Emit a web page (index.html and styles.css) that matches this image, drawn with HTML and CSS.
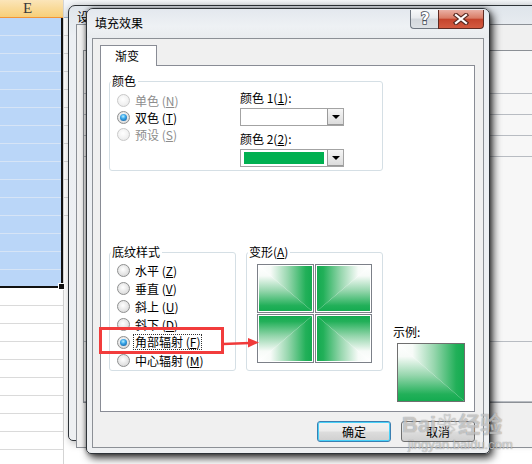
FILE: index.html
```html
<!DOCTYPE html>
<html>
<head>
<meta charset="utf-8">
<link rel="stylesheet" href="styles.css">
</head>
<body>
<svg class="defs" width="0" height="0">
  <defs>
    <linearGradient id="gx" x1="0" y1="0" x2="1" y2="0">
      <stop offset="0" stop-color="#ffffff"/>
      <stop offset="0.22" stop-color="#f7fbf8"/>
      <stop offset="0.55" stop-color="#96d6ad"/>
      <stop offset="0.88" stop-color="#22b059"/>
      <stop offset="1" stop-color="#14ab50"/>
    </linearGradient>
    <linearGradient id="gy" x1="0" y1="0" x2="0" y2="1">
      <stop offset="0" stop-color="#ffffff"/>
      <stop offset="0.22" stop-color="#f7fbf8"/>
      <stop offset="0.55" stop-color="#96d6ad"/>
      <stop offset="0.88" stop-color="#22b059"/>
      <stop offset="1" stop-color="#14ab50"/>
    </linearGradient>
  </defs>
</svg>

<div class="desktop">
  <!-- spreadsheet behind the dialogs -->
  <div class="sheet">
    <div class="col-e">
      <div class="col-head">E</div>
      <div class="selected"><span class="handle"></span></div>
      <div class="cells"></div>
    </div>
    <div class="col-f">
      <div class="col-head plain"></div>
      <div class="cells"></div>
    </div>
  </div>

  <!-- format cells dialog, mostly hidden -->
  <div class="window back">
    <div class="titlebar"><span class="title">设</span></div>
    <div class="client">
      <div class="back-tabs"></div>
      <div class="back-page">
        <div class="back-row"></div>
        <div class="back-row"></div>
        <div class="back-row"></div>
        <div class="back-row"></div>
        <div class="back-row tall"></div>
        <div class="back-row mid"></div>
      </div>
    </div>
  </div>

  <!-- fill effects dialog -->
  <div class="window dialog">
    <div class="titlebar">
      <span class="title">填充效果</span>
      <div class="caption-buttons">
        <span class="cap help">
          <svg width="14" height="16" viewBox="0 0 14 16"><text x="7" y="13" text-anchor="middle">?</text></svg>
        </span>
        <span class="cap close">
          <svg width="16" height="12" viewBox="0 0 16 12">
            <path class="x-out" d="M3 2 L13 10 M13 2 L3 10"/>
            <path class="x-in" d="M3 2 L13 10 M13 2 L3 10"/>
          </svg>
        </span>
      </div>
    </div>

    <div class="client">
      <div class="tabs"><span class="tab">渐变</span></div>
      <div class="page">
        <fieldset class="group colors">
          <legend>颜色</legend>
          <div class="colors-body">
            <div class="radios">
              <div class="opt disabled"><span class="radio"></span>单色 (<u>N</u>)</div>
              <div class="opt"><span class="radio on"></span>双色 (<u>T</u>)</div>
              <div class="opt disabled"><span class="radio"></span>预设 (<u>S</u>)</div>
            </div>
            <div class="pickers">
              <div class="field-label first">颜色 1(<u>1</u>):</div>
              <div class="combo"><span class="value"></span><span class="drop"></span></div>
              <div class="field-label">颜色 2(<u>2</u>):</div>
              <div class="combo"><span class="value"><span class="swatch"></span></span><span class="drop"></span></div>
            </div>
          </div>
        </fieldset>

        <div class="lower">
          <fieldset class="group styles">
            <legend>底纹样式</legend>
            <div class="styles-body">
              <div class="opt"><span class="radio"></span>水平 (<u>Z</u>)</div>
              <div class="opt"><span class="radio"></span>垂直 (<u>V</u>)</div>
              <div class="opt"><span class="radio"></span>斜上 (<u>U</u>)</div>
              <div class="opt"><span class="radio"></span>斜下 (<u>D</u>)</div>
              <div class="opt"><span class="radio on"></span><span class="focus">角部辐射 (<u>F</u>)</span></div>
              <div class="opt"><span class="radio"></span>中心辐射 (<u>M</u>)</div>
            </div>
          </fieldset>

          <fieldset class="group variants">
            <legend>变形(<u>A</u>)</legend>
            <div class="tiles">
              <div class="tile"><svg class="grad" viewBox="0 0 100 100" preserveAspectRatio="none"><polygon points="0,0 100,0 100,100" fill="url(#gx)"/><polygon points="0,0 0,100 100,100" fill="url(#gy)"/></svg></div>
              <div class="tile flip-x"><svg class="grad" viewBox="0 0 100 100" preserveAspectRatio="none"><polygon points="0,0 100,0 100,100" fill="url(#gx)"/><polygon points="0,0 0,100 100,100" fill="url(#gy)"/></svg></div>
              <div class="tile flip-y"><svg class="grad" viewBox="0 0 100 100" preserveAspectRatio="none"><polygon points="0,0 100,0 100,100" fill="url(#gx)"/><polygon points="0,0 0,100 100,100" fill="url(#gy)"/></svg></div>
              <div class="tile flip-xy"><svg class="grad" viewBox="0 0 100 100" preserveAspectRatio="none"><polygon points="0,0 100,0 100,100" fill="url(#gx)"/><polygon points="0,0 0,100 100,100" fill="url(#gy)"/></svg></div>
            </div>
          </fieldset>

          <div class="sample">
            <div class="sample-label">示例:</div>
            <div class="sample-box"><svg class="grad" viewBox="0 0 100 100" preserveAspectRatio="none"><polygon points="0,0 100,0 100,100" fill="url(#gx)"/><polygon points="0,0 0,100 100,100" fill="url(#gy)"/></svg></div>
          </div>
        </div>
      </div>

      <div class="buttons">
        <button class="btn default">确定</button>
        <button class="btn">取消</button>
      </div>
    </div>
  </div>

  <!-- annotation -->
  <div class="callout"></div>
  <svg class="arrow" width="40" height="16" viewBox="0 0 40 16">
    <path d="M1 9 L28 8" stroke="#f03a3a" stroke-width="2.4"/>
    <polygon points="26,3 37,7.5 26,12.5" fill="#f03a3a"/>
  </svg>

  <div class="watermark">
    <span class="wm-brand">Bai<span class="paw">❀</span>经验</span>
    <span class="wm-url">jingyan.baidu.com</span>
  </div>
</div>
</body>
</html>
```

FILE: styles.css
```css
body {
  margin: 0;
  font-family: "Noto Sans CJK SC", "Liberation Sans", sans-serif;
  font-size: 12px;
  color: #000;
}

.defs {
  position: absolute;
  width: 0;
  height: 0;
}

.desktop {
  position: relative;
  width: 532px;
  height: 464px;
  overflow: hidden;
  background: #fff;
}

/* ---------- spreadsheet ---------- */
.sheet {
  display: flex;
  height: 100%;
}

.col-e {
  width: 63px;
}

.col-f {
  flex: 1;
  border-left: 1px solid #d4d4d4;
}

.col-head {
  height: 17px;
  border-bottom: 1px solid #f29436;
  background: linear-gradient(#fbe5b9, #f7cf78);
  text-align: center;
  font: 15px/17px "Liberation Serif", serif;
  color: #3a3a3a;
  padding-right: 8px;
}

.col-head.plain {
  background: linear-gradient(#f6f8fa, #e4e9ef);
  border-bottom-color: #9eb6ce;
}

.selected {
  position: relative;
  height: 270px;
  box-sizing: border-box;
  border-right: 2px solid #111;
  border-bottom: 2px solid #111;
  background: repeating-linear-gradient(to bottom, #bad6f8 0 17px, #d6e4f6 17px 18px);
}

.handle {
  position: absolute;
  right: -4px;
  bottom: -4px;
  width: 5px;
  height: 5px;
  background: #111;
  border: 1px solid #fff;
}

.cells {
  height: 200px;
  background: repeating-linear-gradient(to bottom, #fff 0 17px, #dadada 17px 18px);
}

/* ---------- windows ---------- */
.window {
  position: absolute;
  box-sizing: border-box;
  border: 1px solid #2e3338;
  border-radius: 7px 7px 5px 5px;
  background: linear-gradient(#dfe5eb, #eceff3 30px, #eef0f2);
  padding: 0 5px 5px;
  display: flex;
  flex-direction: column;
}

.titlebar {
  height: 29px;
  display: flex;
  align-items: flex-start;
  padding-left: 8px;
}

.title {
  margin-top: 7px;
  font-size: 12px;
  line-height: 14px;
}

.client {
  flex: 1;
  border: 1px solid #8c9096;
  background: #f0f0f0;
  display: flex;
  flex-direction: column;
}

.back {
  left: 68px;
  top: 5px;
  width: 480px;
  height: 436px;
  box-shadow: 2px 2px 8px rgba(0, 0, 0, 0.35);
  padding: 0 7px 6px;
}

.back .titlebar {
  height: 24px;
  padding-left: 1px;
}

.back .title {
  margin-top: 4px;
}

.back-tabs {
  height: 25px;
}

.back-page {
  margin: 0 6px 44px;
  flex: 1;
  border: 1px solid #8c9096;
  background: #f7f7f7;
  padding-top: 22px;
}

.back-row {
  height: 20px;
  border-bottom: 1px solid #b8bcc2;
}

.back-row.tall {
  height: 184px;
}

.back-row.mid {
  height: 59px;
}

.dialog {
  left: 86px;
  top: 8px;
  width: 404px;
  height: 446px;
  box-shadow: 3px 4px 9px rgba(0, 0, 0, 0.8), 0 0 4px rgba(0, 0, 0, 0.4);
}

.dialog .titlebar {
  background: linear-gradient(#e3e8ee, #eef1f4 60%, #e9ecef);
  margin: 0 -5px;
  padding-left: 8px;
  border-radius: 6px 6px 0 0;
}

.caption-buttons {
  margin-left: auto;
  margin-right: 5px;
  margin-top: 1px;
  display: flex;
}

.cap {
  height: 19px;
  box-sizing: border-box;
  display: flex;
  align-items: center;
  justify-content: center;
}

.help {
  width: 28px;
  border: 1px solid #6f7680;
  border-right: none;
  border-top: none;
  border-radius: 0 0 0 4px;
  background: linear-gradient(#f7f8f9, #e8eaed 45%, #d3d7dc 50%, #dde1e5);
}

.help text {
  font: bold 15px "DejaVu Sans", sans-serif;
  fill: #fff;
  stroke: #4b515a;
  stroke-width: 1.6px;
  paint-order: stroke;
}

.close {
  width: 46px;
  border: 1px solid #5e2a22;
  border-top: none;
  border-radius: 0 0 4px 0;
  background: linear-gradient(#eab0a4, #d97c66 45%, #c5452d 52%, #d35a40);
}

.x-out {
  stroke: #5a2a22;
  stroke-width: 4.4;
  stroke-linecap: square;
  fill: none;
}

.x-in {
  stroke: #fff;
  stroke-width: 2.2;
  stroke-linecap: square;
  fill: none;
}

/* ---------- dialog client ---------- */
.dialog .client {
  padding: 6px 8px 0 7px;
}

.tabs {
  display: flex;
}

.tab {
  position: relative;
  z-index: 1;
  width: 57px;
  height: 21px;
  box-sizing: border-box;
  margin-bottom: -1px;
  border: 1px solid #898c95;
  border-bottom: none;
  background: #fff;
  padding-left: 14px;
  line-height: 19px;
}

.page {
  height: 347px;
  box-sizing: border-box;
  border: 1px solid #898c95;
  background: #fff;
  padding: 8px 0 0 8px;
}

.group {
  margin: 0;
  padding: 0;
  min-width: 0;
  box-sizing: border-box;
  border: 1px solid #d5dfe5;
  border-radius: 3px;
}

.group legend {
  padding: 0 2px 0 1px;
  margin-left: 1px;
  line-height: 14px;
}

.colors {
  width: 274px;
  height: 97px;
}

.colors-body {
  display: flex;
  padding: 4px 0 0 7px;
}

.radios {
  width: 123px;
}

.opt {
  display: flex;
  align-items: center;
  height: 17px;
  white-space: nowrap;
}

.opt.disabled {
  color: #8d8d8d;
}

.radio {
  position: relative;
  width: 13px;
  height: 13px;
  box-sizing: border-box;
  margin-right: 5px;
  border-radius: 50%;
  border: 1px solid #8e8f8f;
  background: radial-gradient(circle at 45% 40%, #fff 0, #eaeaea 45%, #cfcfcf 100%);
}

.disabled .radio {
  border-color: #c9c9c9;
  background: radial-gradient(circle at 45% 40%, #fff 0, #f3f3f3 50%, #e4e4e4 100%);
}

.radio.on::after {
  content: "";
  position: absolute;
  left: 2px;
  top: 2px;
  width: 7px;
  height: 7px;
  border-radius: 50%;
  background: radial-gradient(circle at 45% 35%, #b8f0ff 0, #36a4e8 40%, #0e4f8e 100%);
}

.pickers {
  display: flex;
  flex-direction: column;
}

.field-label {
  line-height: 14px;
  margin-top: 6px;
}

.field-label.first {
  margin-top: -1px;
}

.combo {
  display: flex;
  width: 104px;
  height: 18px;
  box-sizing: border-box;
  margin-top: 3px;
  border: 1px solid #a3a3a3;
  background: #fff;
}

.combo .value {
  flex: 1;
  padding: 2px 3px;
}

.swatch {
  display: block;
  height: 12px;
  background: #00b050;
}

.drop {
  width: 16px;
  box-sizing: border-box;
  border: 1px solid #9a9a9a;
  border-right: none;
  border-top: none;
  background: linear-gradient(#f6f6f6, #dcdcdc);
  display: flex;
  align-items: center;
  justify-content: center;
}

.drop::before {
  content: "";
  border-left: 4px solid transparent;
  border-right: 4px solid transparent;
  border-top: 4px solid #000;
  margin-top: 1px;
}

.lower {
  display: flex;
  align-items: flex-start;
  margin-top: 74px;
}

.styles {
  width: 127px;
  height: 126px;
}

.styles-body {
  padding: 2px 0 0 7px;
}

.styles-body .opt {
  height: 18px;
}

.focus {
  outline: 1px dotted #333;
  outline-offset: 0;
  padding: 0 1px;
  margin-left: -1px;
  line-height: 14px;
}

.variants {
  width: 137px;
  height: 126px;
  margin-left: 10px;
}

.tiles {
  display: grid;
  grid-template-columns: 57px 57px;
  grid-template-rows: 49px 49px;
  gap: 1px;
  padding: 5px 0 0 10px;
}

.tile {
  border: 1px solid #7c8088;
  padding: 1px;
  background: #fff;
}

.grad {
  display: block;
  width: 100%;
  height: 100%;
}

.flip-x .grad {
  transform: scaleX(-1);
}

.flip-y .grad {
  transform: scaleY(-1);
}

.flip-xy .grad {
  transform: scale(-1, -1);
}

.sample {
  margin: 80px 0 0 10px;
}

.sample-label {
  line-height: 14px;
}

.sample-box {
  width: 68px;
  height: 59px;
  box-sizing: border-box;
  margin: 4px 0 0 4px;
  border: 1px solid #6f6f6f;
}

.buttons {
  display: flex;
  justify-content: flex-end;
  gap: 10px;
  margin-top: 9px;
}

.btn {
  width: 74px;
  height: 21px;
  padding: 0;
  font: 12px "Noto Sans CJK SC", sans-serif;
  color: #000;
  border: 1px solid #707070;
  border-radius: 3px;
  background: linear-gradient(#f2f2f2, #ebebeb 48%, #dddddd 52%, #cfcfcf);
}

.btn.default {
  border-color: #3c7fb1;
  box-shadow: inset 0 0 0 1px #48d1f8;
}

/* ---------- annotation ---------- */
.callout {
  position: absolute;
  left: 99px;
  top: 327px;
  width: 125px;
  height: 27px;
  box-sizing: border-box;
  border: 3px solid #f23c3c;
}

.arrow {
  position: absolute;
  left: 222px;
  top: 335px;
}

.watermark {
  position: absolute;
  left: 402px;
  top: 412px;
  display: flex;
  flex-direction: column;
  color: rgba(255, 255, 255, 0.5);
  text-shadow: 0 0 1px rgba(80, 80, 80, 0.4), 0 0 1px rgba(80, 80, 80, 0.4);
  pointer-events: none;
}

.wm-brand {
  font: bold 22px/26px "Liberation Sans", "Noto Sans CJK SC", sans-serif;
}

.paw {
  font-size: 20px;
  margin: 0 1px;
}

.wm-url {
  font: 13px/14px "Liberation Sans", sans-serif;
  margin-left: 6px;
}
```
